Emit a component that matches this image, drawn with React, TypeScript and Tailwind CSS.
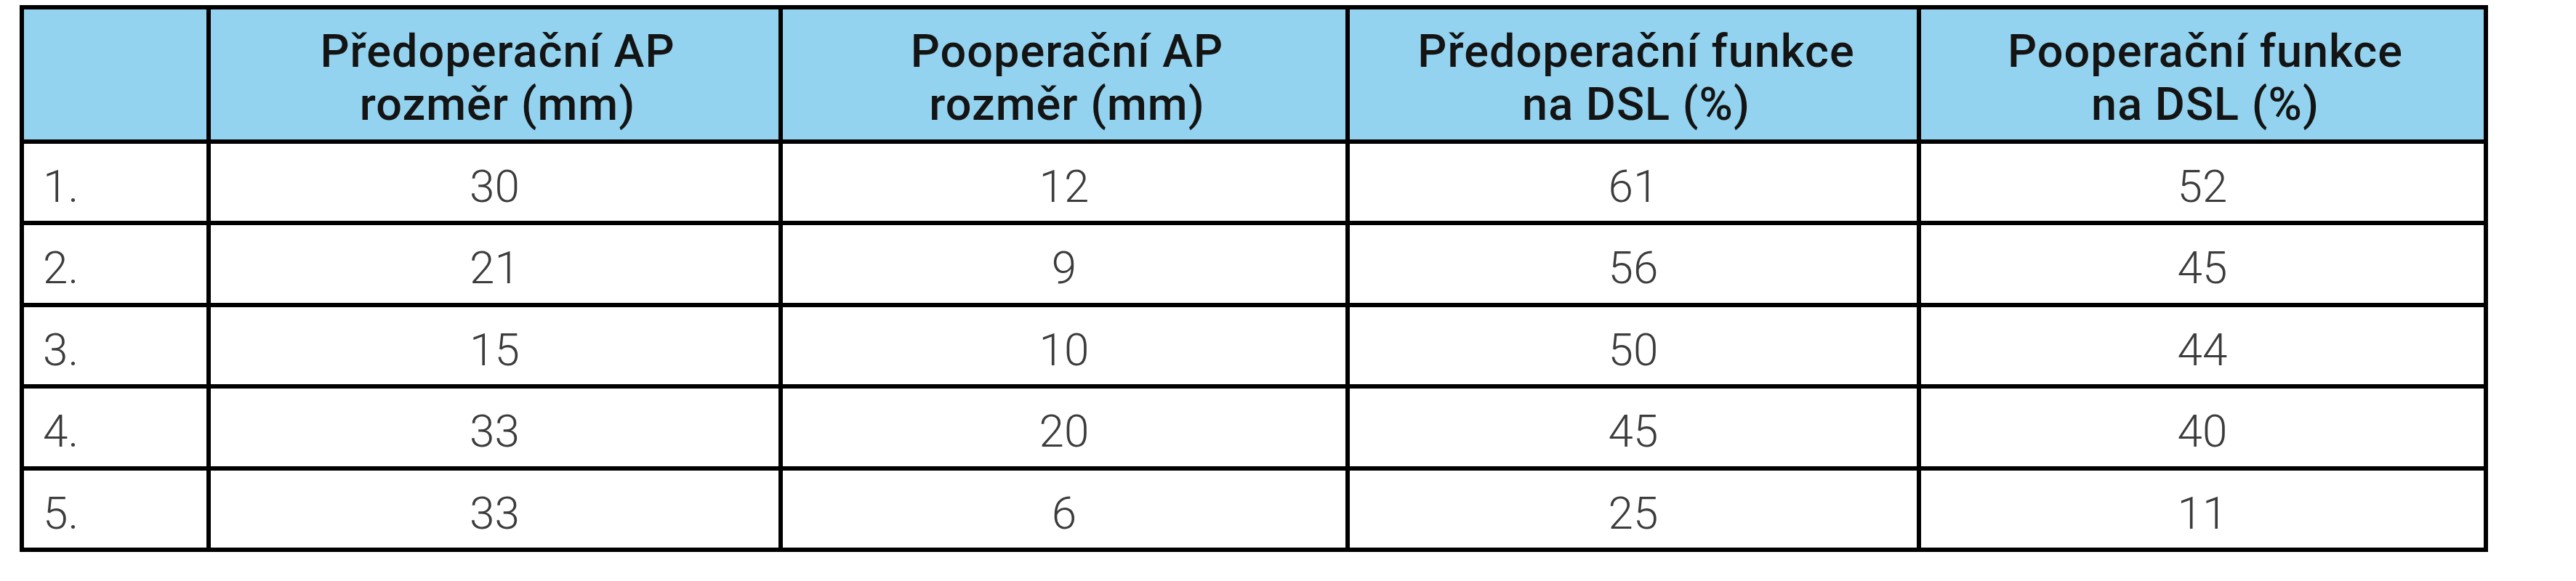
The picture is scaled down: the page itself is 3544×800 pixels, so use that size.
import React from "react";

const headers: [string, string][] = [
  ["Předoperační AP", "rozměr (mm)"],
  ["Pooperační AP", "rozměr (mm)"],
  ["Předoperační funkce", "na DSL (%)"],
  ["Pooperační funkce", "na DSL (%)"],
];

const rows: [string, string, string, string, string][] = [
  ["1.", "30", "12", "61", "52"],
  ["2.", "21", "9", "56", "45"],
  ["3.", "15", "10", "50", "44"],
  ["4.", "33", "20", "45", "40"],
  ["5.", "33", "6", "25", "11"],
];

export default function App() {
  return (
    <div className="w-[3544px] h-[800px] bg-white pl-[27px] pt-[7px] font-['Roboto','Liberation_Sans',sans-serif]">
      <div className="inline-grid bg-black p-[6px] gap-[6px] grid-cols-[251px_781px_774px_780px_774px] grid-rows-[179px_106px_107px_106px_107px_106px]">
        <div className="bg-[#93d3ef]" />
        {headers.map(([a, b], i) => (
          <div
            key={i}
            className="bg-[#93d3ef] flex flex-col items-center justify-center text-center text-[63px] leading-[73px] font-medium text-[#141414] tracking-[1px] pt-[9px] pl-[8px]"
          >
            <span>{a}</span>
            <span>{b}</span>
          </div>
        ))}
        {rows.map((r, ri) => (
          <React.Fragment key={ri}>
            <div className="bg-white flex items-center pl-[26px] pt-[10px] text-[62px] text-[#3c3c3c] font-light">
              {r[0]}
            </div>
            {r.slice(1).map((v, ci) => (
              <div
                key={ci}
                className="bg-white flex items-center justify-center pt-[10px] text-[62px] text-[#3c3c3c] font-light"
              >
                {v}
              </div>
            ))}
          </React.Fragment>
        ))}
      </div>
    </div>
  );
}
